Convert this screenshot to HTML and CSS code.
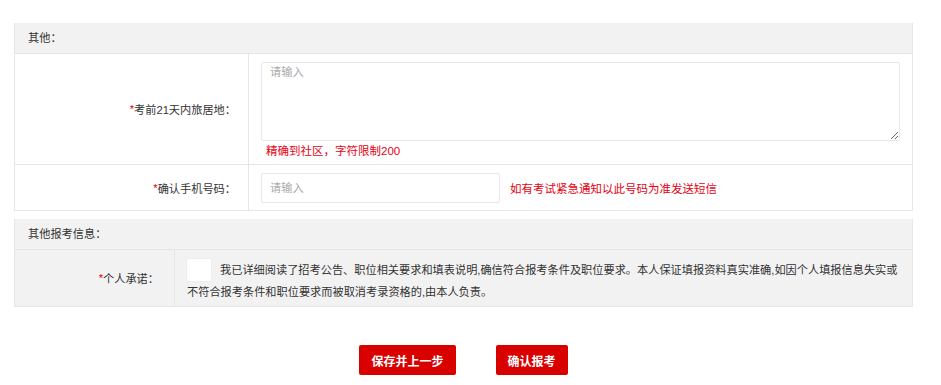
FILE: index.html
```html
<!DOCTYPE html>
<html lang="zh-CN">
<head>
  <meta charset="UTF-8" />
  <title>报名信息</title>
  <meta name="viewport" content="width=device-width, initial-scale=1" />
  <link rel="stylesheet" href="styles.css">
</head>
<body>
  <div class="page">
    <div class="panel">
      <div class="panel-title">其他：</div>
      <div class="form-row">
        <div class="form-label"><span class="req">*</span>考前21天内旅居地：</div>
        <div class="form-field field-area">
          <textarea class="area" placeholder="请输入"></textarea>
          <div class="hint hint-below">精确到社区，字符限制200</div>
        </div>
      </div>
      <div class="form-row">
        <div class="form-label"><span class="req">*</span>确认手机号码：</div>
        <div class="form-field inline">
          <input type="text" class="txt" placeholder="请输入" />
          <span class="hint">如有考试紧急通知以此号码为准发送短信</span>
        </div>
      </div>
    </div>

    <div class="panel panel-grey">
      <div class="panel-title">其他报考信息：</div>
      <div class="form-row promise">
        <div class="form-label"><span class="req">*</span>个人承诺：</div>
        <div class="form-field">
          <p class="promise-text"><span class="check"></span>我已详细阅读了招考公告、职位相关要求和填表说明,确信符合报考条件及职位要求。本人保证填报资料真实准确,如因个人填报信息失实或不符合报考条件和职位要求而被取消考录资格的,由本人负责。</p>
        </div>
      </div>
    </div>

    <div class="actions">
      <button class="btn">保存并上一步</button>
      <button class="btn">确认报考</button>
    </div>
  </div>
</body>
</html>
```

FILE: styles.css
```css
body {
  margin: 0;
  font-family: "Liberation Sans", "Noto Sans CJK SC", sans-serif;
  font-size: 11.2px;
  color: #333;
  background: #fff;
}
.page {
  width: 899px;
  margin-left: 14px;
  padding-top: 23px;
}
.panel {
  border: 1px solid #e6e6e6;
  border-top: none;
}
.panel + .panel {
  margin-top: 8px;
}
.panel-title {
  background: #f2f2f2;
  height: 30px;
  line-height: 30px;
  padding-left: 13px;
  border-bottom: 1px solid #e6e6e6;
}
.form-row {
  display: flex;
  border-bottom: 1px solid #e6e6e6;
}
.form-row:last-child {
  border-bottom: none;
}
.form-label {
  width: 234px;
  flex-shrink: 0;
  border-right: 1px solid #e6e6e6;
  display: flex;
  align-items: center;
  justify-content: flex-end;
  padding-right: 12px;
  box-sizing: border-box;
}
.req {
  color: #e60012;
}
.form-field {
  flex: 1;
  padding: 8px 12px 7px 12px;
}
.form-field.field-area {
  padding-bottom: 4px;
}
.form-field.inline {
  display: flex;
  align-items: center;
  gap: 10px;
}
.area {
  display: block;
  width: 639px;
  height: 79px;
  box-sizing: border-box;
  border: 1px solid #e8e8e8;
  border-radius: 2px;
  padding: 0 8px;
  font: inherit;
  color: #333;
  resize: vertical;
}
.txt {
  width: 239px;
  height: 30px;
  box-sizing: border-box;
  border: 1px solid #e8e8e8;
  border-radius: 2px;
  padding: 0 8px;
  font: inherit;
  color: #333;
}
.area::placeholder,
.txt::placeholder {
  color: #aaa;
}
.hint {
  color: #e60012;
  font-size: 11.5px;
}
.hint-below {
  margin: 1px 0 0 5px;
  height: 18px;
  line-height: 18px;
}
.panel-grey .form-row {
  background: #f2f2f2;
}
.promise .form-label {
  width: 160px;
  padding-right: 15px;
}
.promise .form-field {
  padding: 9px 12px 3px 12px;
}
.promise-text {
  margin: 0;
  line-height: 22px;
}
.check {
  display: inline-block;
  width: 24px;
  height: 22px;
  background: #fff;
  border-radius: 2px;
  box-shadow: 0 1px 0 #ececec, 0 0 0 1px #eeeeee;
  vertical-align: top;
  margin-right: 9px;
}
.actions {
  display: flex;
  justify-content: center;
  gap: 40px;
  margin-top: 38px;
}
.btn {
  height: 30px;
  padding: 0 12px;
  border: none;
  border-radius: 2px;
  background: #d90000;
  color: #fff;
  font: bold 12px "Liberation Sans", "Noto Sans CJK SC", sans-serif;
  cursor: pointer;
}
```
